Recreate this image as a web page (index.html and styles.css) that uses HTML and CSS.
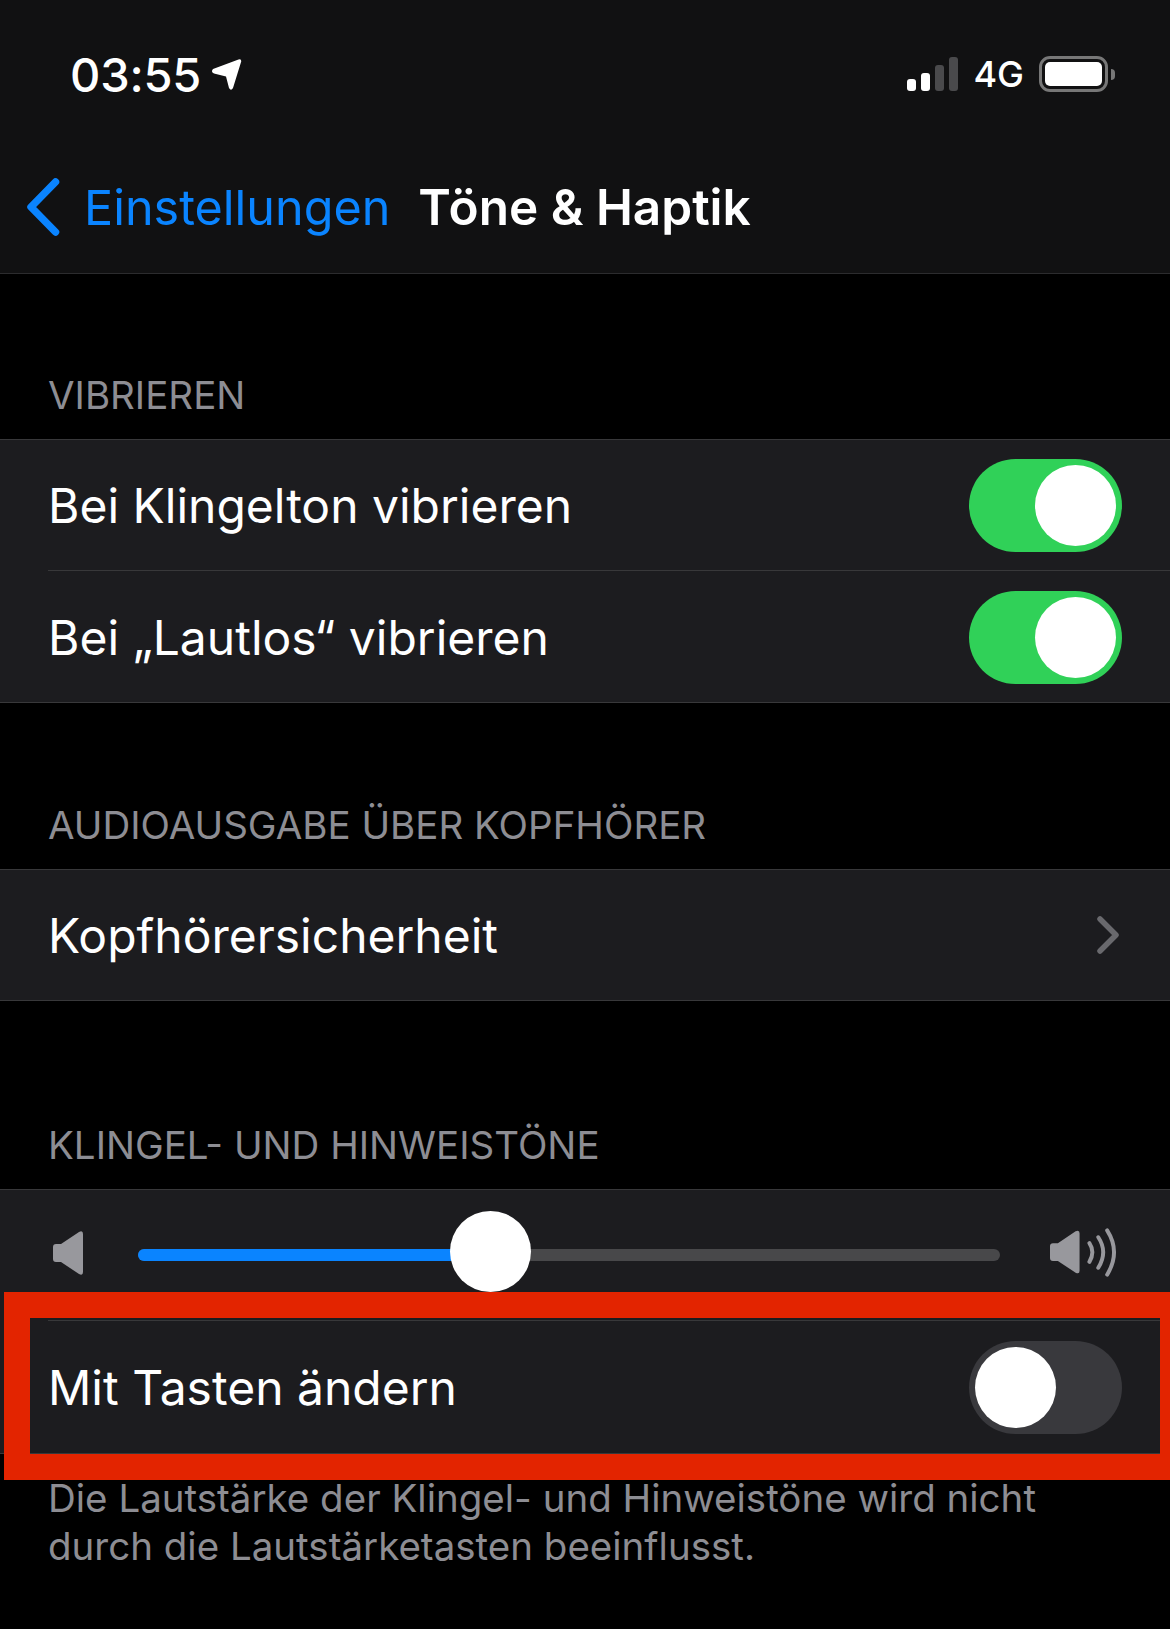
FILE: index.html
```html
<!DOCTYPE html>
<html>
<head>
    <title>Töne &amp; Haptik</title>
    <link rel="stylesheet" href="styles.css">
</head>
<body>
    <div class="status-bar">
        <div class="status-left">
            <span class="time">03:55</span>
            <svg class="location" viewBox="0 0 30 31"><path d="M1.5 10 L27 0.5 Q30 -0.5 29.7 2.5 L21.5 29 Q19.5 32.5 17.5 29 L14.5 17.5 L2.5 14.5 Q-1 13 1.5 10 Z" fill="#fff"/></svg>
        </div>
        <div class="status-right">
            <div class="signal">
                <span class="bar bar-1"></span>
                <span class="bar bar-2"></span>
                <span class="bar bar-3"></span>
                <span class="bar bar-4"></span>
            </div>
            <span class="network">4G</span>
            <div class="battery"><div class="battery-fill"></div></div>
            <div class="battery-nub"></div>
        </div>
    </div>

    <header class="nav">
        <svg class="back-icon" viewBox="0 0 34 58"><path d="M29.5 4 L5 29 L29.5 54" fill="none" stroke="#0a84ff" stroke-width="7.5" stroke-linecap="round" stroke-linejoin="round"/></svg>
        <span class="back-label">Einstellungen</span>
        <h1 class="nav-title">Töne &amp; Haptik</h1>
    </header>

    <h2 class="section-label first">VIBRIEREN</h2>
    <div class="group">
        <div class="row">
            <span class="row-text">Bei Klingelton vibrieren</span>
            <div class="switch on"><div class="knob"></div></div>
        </div>
        <div class="row row-second">
            <span class="row-text">Bei „Lautlos“ vibrieren</span>
            <div class="switch on"><div class="knob"></div></div>
        </div>
    </div>

    <h2 class="section-label">AUDIOAUSGABE ÜBER KOPFHÖRER</h2>
    <div class="group">
        <div class="row">
            <span class="row-text">Kopfhörersicherheit</span>
            <svg class="chevron" viewBox="0 0 22 38"><path d="M3 3 L19 19 L3 35" fill="none" stroke="#69696d" stroke-width="5.5" stroke-linecap="round" stroke-linejoin="round"/></svg>
        </div>
    </div>

    <h2 class="section-label tall">KLINGEL- UND HINWEISTÖNE</h2>
    <div class="group">
        <div class="row slider-row">
            <svg class="speaker" viewBox="0 0 30 44"><path d="M3 13 H8 L26 1 Q30 -1 30 3 V41 Q30 45 26 43 L8 31 H3 Q0 31 0 28 V16 Q0 13 3 13 Z" fill="#98989d"/></svg>
            <div class="track">
                <div class="track-fill"></div>
                <div class="slider-knob"></div>
            </div>
            <svg class="speaker-loud" viewBox="0 0 68 50"><path d="M3 15 H8 L26 3 Q30 1 30 5 V43 Q30 47 26 45 L8 33 H3 Q0 33 0 30 V18 Q0 15 3 15 Z" fill="#98989d"/><path d="M40 15 Q46 24 40 34 M49 9 Q59 24 49 40 M58 2 Q72 24 58 47" fill="none" stroke="#98989d" stroke-width="4" stroke-linecap="round"/></svg>
        </div>
        <div class="row row-last">
            <span class="row-text">Mit Tasten ändern</span>
            <div class="switch"><div class="knob"></div></div>
        </div>
    </div>
    <p class="footnote">Die Lautstärke der Klingel- und Hinweistöne wird nicht durch die Lautstärketasten beeinflusst.</p>

    <div class="highlight"></div>
</body>
</html>
```

FILE: styles.css
```css
* { margin: 0; padding: 0; box-sizing: border-box; }
html, body { height: 1629px; overflow: hidden; }
body { position: relative; font-family: Inter, "Liberation Sans", sans-serif; background-color: #000; color: #fff; }

.status-bar {
    display: flex; justify-content: space-between; align-items: center;
    height: 148px; padding: 0 55px 0 70px; background-color: #111112;
}
.status-left, .status-right { display: flex; align-items: center; }
.time { font-size: 47px; font-weight: 500; letter-spacing: -0.2px; }
.location { width: 31px; height: 31px; margin-left: 10px; }
.signal { display: flex; align-items: flex-end; gap: 5px; height: 34px; }
.bar { width: 9px; border-radius: 3px; background-color: #4a4a4c; }
.bar-1 { height: 12px; background-color: #fff; }
.bar-2 { height: 18px; background-color: #fff; }
.bar-3 { height: 26px; }
.bar-4 { height: 34px; }
.network { margin-left: 15px; font-size: 36px; font-weight: 500; }
.battery {
    width: 69px; height: 36px; margin-left: 15px; padding: 3px;
    border: 3px solid #777; border-radius: 11px;
}
.battery-fill { width: 100%; height: 100%; border-radius: 5px; background-color: #fff; }
.battery-nub { width: 4px; height: 11px; margin-left: 3px; border-radius: 0 5px 5px 0; background-color: #777; }

.nav {
    display: flex; align-items: center;
    height: 126px; padding: 0 0 7px 26px;
    background-color: #111112; border-bottom: 1px solid #2c2c2e;
}
.back-icon { width: 34px; height: 58px; }
.back-label { margin-left: 24px; font-size: 48.5px; color: #0a84ff; }
.nav-title { margin-left: 28px; font-size: 49.5px; font-weight: 600; }

.section-label {
    display: flex; align-items: flex-end;
    height: 166px; padding: 0 48px 21px;
    font-size: 38.5px; font-weight: 400; color: #8d8d93;
}
.section-label.first { height: 165px; }
.section-label.tall { height: 188px; }

.group { background-color: #1c1c1f; border-top: 1px solid #38383a; border-bottom: 1px solid #38383a; }
.row {
    display: flex; justify-content: space-between; align-items: center;
    height: 131px; margin-left: 48px; padding-right: 48px;
    border-top: 1px solid #38383a;
}
.row:first-child { height: 130px; border-top: none; }
.row-second { height: 132px; padding-top: 2px; }
.row-last { height: 133px; }
.row-text { font-size: 48px; }

.switch {
    width: 153px; height: 93px; padding: 6px;
    border-radius: 47px; background-color: #39393d;
}
.switch.on { display: flex; justify-content: flex-end; background-color: #30d158; }
.knob { width: 81px; height: 81px; border-radius: 50%; background-color: #fff; }
.chevron { width: 22px; height: 38px; margin-right: 3px; }

.slider-row { justify-content: flex-start; margin-left: 0; padding: 0 0 0 53px; }
.speaker { width: 30px; height: 44px; margin-bottom: 4px; }
.speaker-loud { width: 67px; height: 50px; margin-bottom: 4px; }
.track {
    position: relative; width: 862px; height: 12px; margin: 0 50px 0 55px;
    border-radius: 6px; background-color: #48484a;
}
.track-fill { width: 330px; height: 100%; border-radius: 6px; background-color: #0a84ff; }
.slider-knob {
    position: absolute; left: 312px; top: -38px;
    width: 81px; height: 81px; border-radius: 50%; background-color: #fff;
}

.footnote { padding: 20px 80px 0 48px; font-size: 38.5px; line-height: 48px; color: #8d8d93; }

.highlight {
    position: absolute; left: 4px; top: 1292px; right: 0; height: 188px;
    border: solid #e32400; border-width: 26px 10px 26px 26px;
}
```
